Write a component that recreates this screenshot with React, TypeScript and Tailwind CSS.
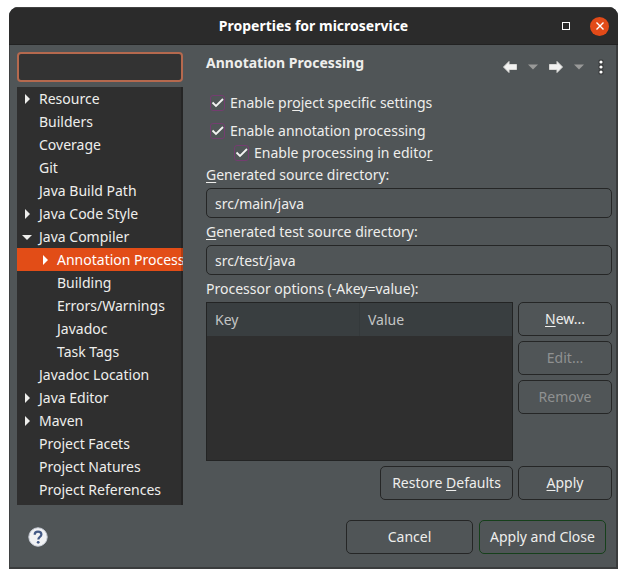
import React, { useState } from "react";

type Item = { label: string; depth: 0 | 1; state?: "open" | "closed" };

const items: Item[] = [
  { label: "Resource", depth: 0, state: "closed" },
  { label: "Builders", depth: 0 },
  { label: "Coverage", depth: 0 },
  { label: "Git", depth: 0 },
  { label: "Java Build Path", depth: 0 },
  { label: "Java Code Style", depth: 0, state: "closed" },
  { label: "Java Compiler", depth: 0, state: "open" },
  { label: "Annotation Processing", depth: 1, state: "closed" },
  { label: "Building", depth: 1 },
  { label: "Errors/Warnings", depth: 1 },
  { label: "Javadoc", depth: 1 },
  { label: "Task Tags", depth: 1 },
  { label: "Javadoc Location", depth: 0 },
  { label: "Java Editor", depth: 0, state: "closed" },
  { label: "Maven", depth: 0, state: "closed" },
  { label: "Project Facets", depth: 0 },
  { label: "Project Natures", depth: 0 },
  { label: "Project References", depth: 0 },
];

function Expander({ state }: { state?: "open" | "closed" }) {
  return (
    <svg viewBox="0 0 12 12" className="h-3 w-3 shrink-0" fill="currentColor" aria-hidden="true">
      {state === "closed" && <path d="M4 1v10l5-5z" />}
      {state === "open" && <path d="M1 4h10l-5 5z" />}
    </svg>
  );
}

function Tree() {
  const [selected, setSelected] = useState("Annotation Processing");
  return (
    <div className="relative flex-1 overflow-hidden bg-[#2f2f2f] pb-1">
      <ul role="tree" aria-label="Property pages">
        {items.map((item) => (
          <li
            key={item.label}
            role="treeitem"
            aria-level={item.depth + 1}
            aria-selected={selected === item.label}
            aria-expanded={item.state ? item.state === "open" : undefined}
            className={selected === item.label ? "bg-[#e24d17] text-white" : ""}
          >
            <button
              type="button"
              onClick={() => setSelected(item.label)}
              className={
                "flex h-[23px] w-full items-center gap-1.5 overflow-hidden text-left whitespace-nowrap " +
                (item.depth === 1 ? "pl-[22px]" : "pl-1")
              }
            >
              <Expander state={item.state} />
              <span>{item.label}</span>
            </button>
          </li>
        ))}
      </ul>
      <div className="pointer-events-none absolute inset-y-0 right-0 w-0.5 bg-black/20" />
    </div>
  );
}

function Check({ id, className = "", children }: { id: string; className?: string; children: React.ReactNode }) {
  return (
    <div className={"flex h-[22px] items-center gap-[5px] pl-1 " + className}>
      <span className="grid h-4 w-[15px] place-items-center">
        <input
          id={id}
          type="checkbox"
          defaultChecked
          className="peer col-start-1 row-start-1 h-4 w-[15px] appearance-none rounded-[3px] border border-[#743d70]"
        />
        <svg
          viewBox="0 0 15 16"
          className="pointer-events-none invisible col-start-1 row-start-1 h-4 w-[15px] text-[#f4f4f3] peer-checked:visible"
          fill="none"
          stroke="currentColor"
          strokeWidth="1.8"
          aria-hidden="true"
        >
          <path d="M2.500 7.500l3.500 3.500 7-7" />
        </svg>
      </span>
      <label htmlFor={id}>{children}</label>
    </div>
  );
}

function Key({ children }: { children: React.ReactNode }) {
  return <span className="underline underline-offset-2">{children}</span>;
}

function Btn({ className = "", ...rest }: React.ButtonHTMLAttributes<HTMLButtonElement>) {
  return (
    <button
      type="button"
      className={
        "h-[34px] rounded-[5px] border text-center whitespace-nowrap disabled:text-[#8f9191] " + className
      }
      {...rest}
    />
  );
}

function Field({ id, value, children }: { id: string; value: string; children: React.ReactNode }) {
  return (
    <div className="mb-[3px] flex flex-col gap-0.5">
      <label htmlFor={id}>{children}</label>
      <input
        id={id}
        type="text"
        defaultValue={value}
        className="h-[30px] w-full rounded-[5px] border border-[#252626] bg-transparent px-2 outline-none"
      />
    </div>
  );
}

function Toolbar() {
  return (
    <div className="flex h-[30px] items-center pr-2">
      <button type="button" aria-label="Back" className="mr-2.5">
        <svg viewBox="0 0 16 14" className="h-3.5 w-4" fill="#f2f2f1" stroke="#d8d8d6" strokeWidth="1">
          <path d="M1.500 7L7 1.500v3h7.500v5H7v3z" />
        </svg>
      </button>
      <button type="button" aria-label="Back history" className="mr-2.5">
        <svg viewBox="0 0 10 6" className="h-1.5 w-2.5" fill="#999a99">
          <path d="M0 0.500h10L5 5.500z" />
        </svg>
      </button>
      <button type="button" aria-label="Forward" className="mr-2.5">
        <svg viewBox="0 0 16 14" className="h-3.5 w-4" fill="#f2f2f1" stroke="#d8d8d6" strokeWidth="1">
          <path d="M14.500 7L9 1.500v3H1.500v5H9v3z" />
        </svg>
      </button>
      <button type="button" aria-label="Forward history" className="mr-3.5">
        <svg viewBox="0 0 10 6" className="h-1.5 w-2.5" fill="#999a99">
          <path d="M0 0.500h10L5 5.500z" />
        </svg>
      </button>
      <button type="button" aria-label="View menu">
        <svg viewBox="0 0 6 16" className="h-4 w-1.5">
          <g fill="#37393a">
            <rect x="0.500" y="0.500" width="5" height="5" rx="1.500" />
            <rect x="0.500" y="5.500" width="5" height="5" rx="1.500" />
            <rect x="0.500" y="10.500" width="5" height="5" rx="1.500" />
          </g>
          <g fill="#fff">
            <circle cx="3" cy="3" r="1.600" />
            <circle cx="3" cy="8" r="1.600" />
            <circle cx="3" cy="13" r="1.600" />
          </g>
        </svg>
      </button>
    </div>
  );
}

function TitleBar() {
  return (
    <header className="grid h-[38px] grid-cols-[1fr_auto_1fr] items-center border-t border-b border-t-[#424242] border-b-[#222] bg-[#2b2b2b] px-[9px]">
      <h1 className="col-start-2 font-bold text-white">Properties for microservice</h1>
      <div className="flex items-center justify-end gap-5">
        <button type="button" aria-label="Maximize" className="h-2 w-2 border border-white" />
        <button
          type="button"
          aria-label="Close"
          className="grid h-[19px] w-[19px] place-items-center rounded-full bg-[#e24a18]"
        >
          <svg viewBox="0 0 10 10" className="h-2.5 w-2.5" stroke="#fff" strokeWidth="1.400">
            <path d="M1.500 1.500l7 7M8.500 1.500l-7 7" />
          </svg>
        </button>
      </div>
    </header>
  );
}

export default function App() {
  return (
    <div className="bg-white px-[9px] pt-[7px] pb-[9px] font-['Noto_Sans',sans-serif] text-[14px] leading-[22px] text-[#eeeeec]">
      <div className="overflow-hidden rounded-t-[9px] bg-[#505557]">
        <TitleBar />
        <div className="border-r-2 border-b-2 border-l border-r-[#3a3c3d] border-b-[#3a3c3d] border-l-[#3f4142]">
          <div className="flex gap-[23px] pt-[7px] pr-1 pl-[7px]">
            <aside className="flex w-[166px] shrink-0 flex-col gap-[5px]">
              <input
                type="text"
                aria-label="Filter"
                className="h-[30px] w-full rounded-[4px] border-2 border-[#b5694e] bg-[#333] px-2 outline-none"
              />
              <Tree />
            </aside>

            <main className="min-w-0 flex-1">
              <div className="mb-2.5 flex items-start justify-between">
                <h2 className="font-bold">Annotation Processing</h2>
                <Toolbar />
              </div>
              <Check id="project" className="mb-1.5">
                Enable pr<Key>o</Key>ject specific settings
              </Check>
              <Check id="annotation">Enable annotation processing</Check>
              <Check id="editor" className="ml-6">
                Enable processing in edito<Key>r</Key>
              </Check>
              <Field id="src" value="src/main/java">
                <Key>G</Key>enerated source directory:
              </Field>
              <Field id="test" value="src/test/java">
                <Key>G</Key>enerated test source directory:
              </Field>
              <p className="mb-0.5">Processor options (-Akey=value):</p>
              <div className="grid grid-cols-[1fr_94px] gap-[5px]">
                <div className="h-[159px] border border-[#232424] bg-[#2f2f2f]">
                  <table className="w-full table-fixed text-left text-[#c3c5c5]">
                    <thead>
                      <tr className="h-[33px] bg-[#393e40]">
                        <th scope="col" className="border-r border-[#34393b] px-2 font-normal">
                          Key
                        </th>
                        <th scope="col" className="px-2 font-normal">
                          Value
                        </th>
                      </tr>
                    </thead>
                  </table>
                </div>
                <div className="flex flex-col gap-[5px]">
                  <Btn className="border-[#252626]">
                    <Key>N</Key>ew...
                  </Btn>
                  <Btn className="border-[#252626]" disabled>
                    Edit...
                  </Btn>
                  <Btn className="border-[#252626]" disabled>
                    Remove
                  </Btn>
                </div>
                <Btn className="w-[133px] justify-self-end border-[#252626]">
                  Restore <Key>D</Key>efaults
                </Btn>
                <Btn className="border-[#252626]">
                  <Key>A</Key>pply
                </Btn>
              </div>
            </main>
          </div>

          <footer className="flex items-center gap-1.5 pt-[15px] pr-2.5 pb-[13px] pl-[18px]">
            <button type="button" aria-label="Help" className="mr-auto">
              <svg viewBox="0 0 20 20" className="h-5 w-5">
                <circle cx="10" cy="10" r="9.200" fill="#f1f2f4" stroke="#c9ced8" />
                <path
                  d="M6.700 7.800C6.700 5.700 8 4.700 10 4.700s3.400 1.100 3.400 2.800c0 2.400-3.100 2.300-3.100 4.900"
                  fill="none"
                  stroke="#445a86"
                  strokeWidth="2.200"
                />
                <circle cx="10.200" cy="15.300" r="1.400" fill="#445a86" />
              </svg>
            </button>
            <Btn className="w-[127px] border-[#252626]">Cancel</Btn>
            <Btn className="w-[127px] border-[#16401b]">Apply and Close</Btn>
          </footer>
        </div>
      </div>
    </div>
  );
}
